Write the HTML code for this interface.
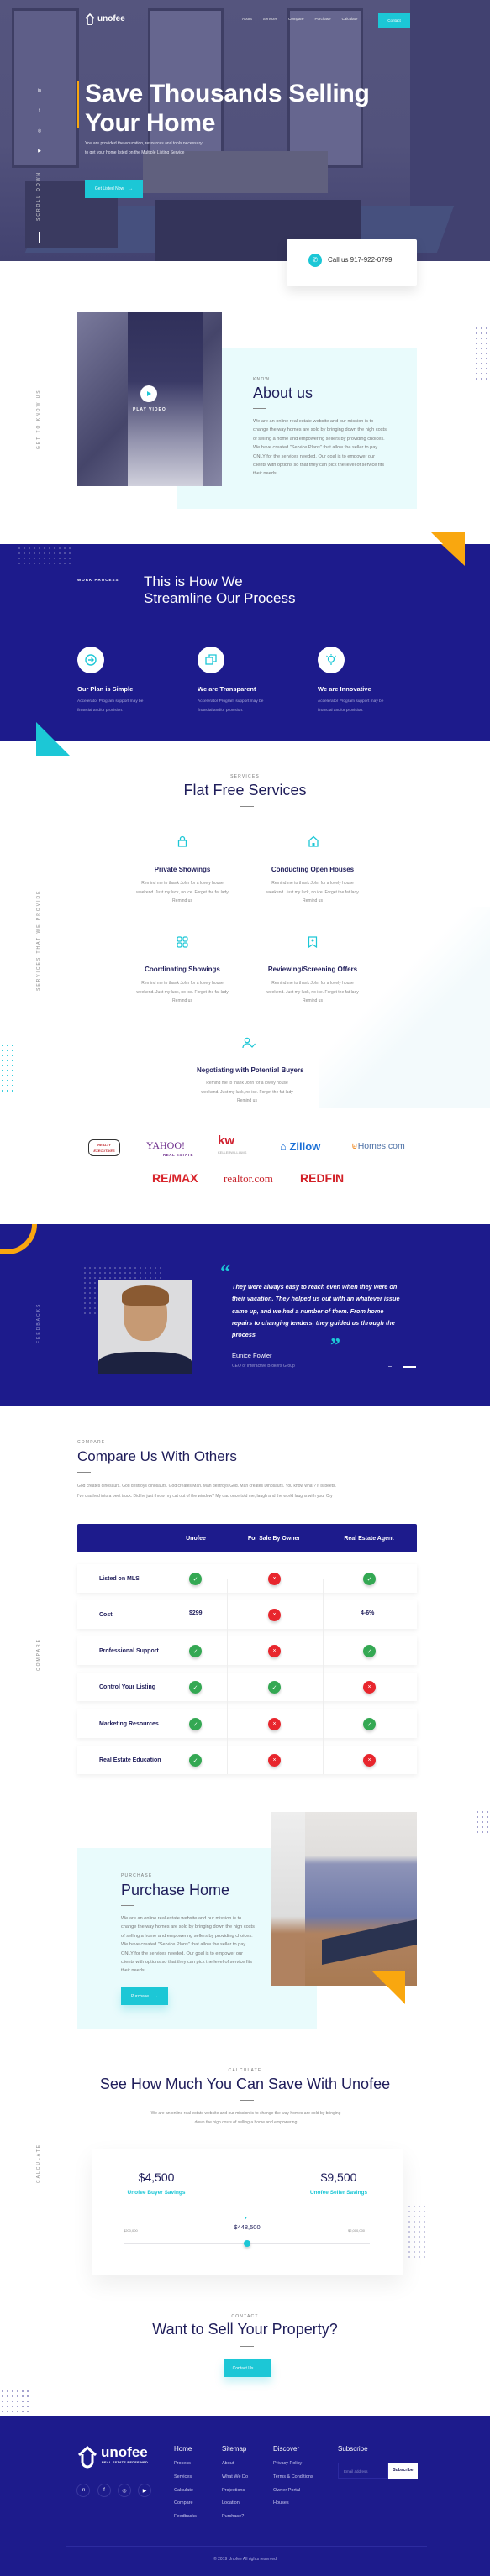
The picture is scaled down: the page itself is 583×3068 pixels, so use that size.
<!DOCTYPE html>
<html><head><meta charset="utf-8">
<style>
*{margin:0;padding:0;box-sizing:border-box}
body{width:583px;height:3068px;position:relative;font-family:"Liberation Sans",sans-serif;background:#fff;overflow:hidden;color:#1f1d5a}
.a{position:absolute}
.navy{background:#1d1b8c}
.cy{color:#1cc7d6}
.lbl{font-size:5px;letter-spacing:1.2px;color:#777;text-transform:uppercase}
.vt{position:absolute;transform:rotate(-90deg);transform-origin:left top;font-size:5px;letter-spacing:2px;color:#888;white-space:nowrap}
.p{font-size:5.6px;line-height:10.4px;color:#777}
.h2{font-size:18px;color:#1f1d5a;white-space:nowrap}
.ln{height:1px;width:16px;background:#888}
.btn{background:#1cc7d6;color:#fff;font-size:6px;display:flex;align-items:center;justify-content:center;gap:6px}
.dots{background-image:radial-gradient(circle,#8a89c0 0.8px,transparent 1.1px);background-size:6px 6px}
.ic{width:32px;height:32px;border-radius:50%;background:#fff;display:flex;align-items:center;justify-content:center}
.st{font-size:8px;font-weight:bold;color:#1f1d5a;text-align:center;white-space:nowrap}
.sp{font-size:5px;line-height:10.5px;color:#888;text-align:center;width:120px}
.row{position:absolute;left:92px;width:404px;height:34px;background:#fff;box-shadow:0 2px 6px rgba(0,0,0,.07);display:flex;align-items:center}
.ok,.no{width:15px;height:15px;border-radius:50%;color:#fff;font-size:7px;display:flex;align-items:center;justify-content:center;box-shadow:0 2px 3px rgba(0,0,0,.2);position:absolute;top:10px}
.ok{background:#34a853}.no{background:#e8262d}
.rl{position:absolute;left:26px;font-size:7px;font-weight:bold;color:#1f1d5a}
.fl{font-size:5.5px;color:#c8c8ee;line-height:15.8px}
.fh{font-size:8px;color:#fff}
.soc{width:16px;height:16px;border-radius:50%;border:1px solid #3a38a0;color:#fff;font-size:6px;display:flex;align-items:center;justify-content:center;position:absolute}
</style></head><body>

<!-- HERO -->
<div class="a" style="left:0;top:0;width:583px;height:311px;background:linear-gradient(180deg,#55557e 0%,#52527c 55%,#424270 100%);overflow:hidden">
  <div class="a" style="left:14px;top:10px;width:80px;height:190px;border:3px solid #3e3e64;background:#5e5e88"></div>
  <div class="a" style="left:176px;top:10px;width:90px;height:190px;border:3px solid #3e3e64;background:#66668f"></div>
  <div class="a" style="left:342px;top:10px;width:90px;height:190px;border:3px solid #3e3e64;background:#66668f"></div>
  <div class="a" style="left:488px;top:0;width:95px;height:311px;background:#414170"></div>
  <div class="a" style="left:170px;top:180px;width:220px;height:50px;background:#60607e"></div>
  <div class="a" style="left:40px;top:245px;width:490px;height:56px;background:#46507e;transform:skewX(-20deg)"></div>
  <div class="a" style="left:185px;top:238px;width:245px;height:73px;background:#34345a"></div>
  <div class="a" style="left:30px;top:215px;width:110px;height:80px;background:#3a3a60"></div>
</div>
<svg class="a" style="left:100px;top:15px" width="14" height="15" viewBox="0 0 14 15"><path d="M2 7L7 2L12 7M4 6V12a3 3 0 0 0 6 0V6" fill="none" stroke="#fff" stroke-width="1.6"/></svg>
<div class="a" style="left:116px;top:17px;font-size:10px;font-weight:bold;color:#fff">unofee</div>
<div class="a" style="left:288px;top:20px;font-size:4.5px;color:#eee;display:flex;gap:13px"><span>About</span><span>Services</span><span>Compare</span><span>Purchase</span><span>Calculate</span></div>
<div class="a btn" style="left:450px;top:15px;width:38px;height:18px;font-size:4.5px">Contact</div>
<div class="a" style="left:92px;top:97px;width:1.5px;height:55px;background:#f9a70f"></div>
<div class="a" style="left:101px;top:94px;font-size:30px;font-weight:bold;color:#fff;line-height:35px;letter-spacing:-.3px">Save Thousands Selling<br>Your Home</div>
<div class="a" style="left:101px;top:166px;font-size:5px;line-height:10.5px;color:#e6e6f2;width:140px">You are provided the education, resources and tools necessary to get your home listed on the Multiple Listing Service</div>
<div class="a btn" style="left:101px;top:214px;width:69px;height:22px;font-size:5px">Get Listed Now <span>→</span></div>
<div class="a" style="left:43px;top:96px;color:#fff;font-size:5px;line-height:24px;text-align:center;width:8px">in<br>f<br>◎<br>▶</div>
<div class="vt" style="left:43px;top:263px;color:#ddd">SCROLL DOWN</div>
<div class="a" style="left:45.5px;top:276px;width:1px;height:14px;background:#fff"></div>
<div class="a" style="left:341px;top:285px;width:155px;height:56px;background:#fff;box-shadow:0 6px 14px rgba(0,0,0,.1);border-radius:2px"></div>
<div class="a" style="left:367px;top:302px;width:16px;height:16px;border-radius:50%;background:#1cc7d6;color:#fff;font-size:8px;text-align:center;line-height:16px">✆</div>
<div class="a" style="left:390px;top:305px;font-size:8px;color:#333">Call us 917-922-0799</div>

<!-- ABOUT -->
<div class="vt" style="left:43px;top:535px">GET TO KNOW US</div>
<div class="a dots" style="left:564px;top:388px;width:19px;height:64px"></div>
<div class="a" style="left:211px;top:414px;width:285px;height:192px;background:#e9fbfc"></div>
<div class="a" style="left:92px;top:371px;width:172px;height:208px;background:linear-gradient(135deg,#7a7a9c,#45456a 50%,#8888a6)">
  <div class="a" style="left:60px;top:0;width:90px;height:208px;background:linear-gradient(180deg,#30305a,#3a3a66 40%,#9696b0 75%,#d0d0dc)"></div>
  <div class="a" style="left:75px;top:88px;width:20px;height:20px;border-radius:50%;background:#fff"></div>
  <div class="a" style="left:83px;top:95px;width:0;height:0;border-left:5px solid #1cc7d6;border-top:3px solid transparent;border-bottom:3px solid transparent"></div>
  <div class="a" style="left:66px;top:114px;font-size:5px;letter-spacing:1px;color:#fff;font-weight:bold">PLAY VIDEO</div>
</div>
<div class="a lbl" style="left:301px;top:449px">KNOW</div>
<div class="a h2" style="left:301px;top:458px">About us</div>
<div class="a ln" style="left:301px;top:486px"></div>
<div class="a p" style="left:301px;top:497px;width:160px">We are an online real estate website and our mission is to change the way homes are sold by bringing down the high costs of selling a home and empowering sellers by providing choices. We have created "Service Plans" that allow the seller to pay ONLY for the services needed. Our goal is to empower our clients with options so that they can pick the level of service fits their needs.</div>
<svg class="a" style="left:513px;top:634px" width="41" height="40"><polygon points="0,0 40,0 40,40" fill="#f9a70f"/></svg>

<!-- PROCESS -->
<div class="a navy" style="left:0;top:648px;width:583px;height:235px"></div>
<div class="a dots" style="left:20px;top:650px;width:64px;height:22px;opacity:.6"></div>
<svg class="a" style="left:513px;top:648px" width="41" height="26"><polygon points="12,0 40,0 40,26" fill="#f9a70f"/></svg>
<div class="a" style="left:92px;top:688px;font-size:4.5px;letter-spacing:1px;color:#fff;font-weight:bold">WORK PROCESS</div>
<div class="a" style="left:171px;top:683px;font-size:17px;color:#fff;line-height:20px">This is How We<br>Streamline Our Process</div>
<div class="a ic" style="left:92px;top:770px"><svg width="16" height="16"><circle cx="8" cy="8" r="6" fill="none" stroke="#1cc7d6" stroke-width="1.4"/><path d="M5 8h6M8.5 5.5L11 8l-2.5 2.5" fill="none" stroke="#1cc7d6" stroke-width="1.4"/></svg></div>
<div class="a ic" style="left:235px;top:770px"><svg width="16" height="16"><rect x="2" y="5" width="8" height="8" fill="none" stroke="#1cc7d6" stroke-width="1.3"/><path d="M6 5V2h8v8h-4" fill="none" stroke="#1cc7d6" stroke-width="1.3"/></svg></div>
<div class="a ic" style="left:378px;top:770px"><svg width="16" height="16"><circle cx="8" cy="7" r="3.5" fill="none" stroke="#1cc7d6" stroke-width="1.3"/><path d="M6.5 11h3M7 13h2M8 1v1.5M2.5 3l1 1M13.5 3l-1 1" stroke="#1cc7d6" stroke-width="1.2"/></svg></div>
<div class="a" style="left:92px;top:816px;font-size:7.5px;font-weight:bold;color:#fff">Our Plan is Simple</div>
<div class="a" style="left:235px;top:816px;font-size:7.5px;font-weight:bold;color:#fff">We are Transparent</div>
<div class="a" style="left:378px;top:816px;font-size:7.5px;font-weight:bold;color:#fff">We are Innovative</div>
<div class="a" style="left:92px;top:831px;font-size:4.8px;line-height:10.5px;color:#a8a8d8;width:90px">Accelerator Program support may be financial and/or provision.</div>
<div class="a" style="left:235px;top:831px;font-size:4.8px;line-height:10.5px;color:#a8a8d8;width:90px">Accelerator Program support may be financial and/or provision.</div>
<div class="a" style="left:378px;top:831px;font-size:4.8px;line-height:10.5px;color:#a8a8d8;width:90px">Accelerator Program support may be financial and/or provision.</div>
<svg class="a" style="left:43px;top:860px" width="40" height="40"><polygon points="0,0 40,40 0,40" fill="#1cc7d6"/></svg>

<!-- SERVICES -->
<div class="a" style="left:380px;top:1080px;width:203px;height:240px;background:linear-gradient(135deg,transparent 40%,#f3fafc 60%)"></div>
<div class="a lbl" style="left:0;top:922px;width:583px;text-align:center">SERVICES</div>
<div class="a h2" style="left:0;top:931px;width:583px;text-align:center">Flat Free Services</div>
<div class="a ln" style="left:286px;top:960px"></div>
<div class="vt" style="left:43px;top:1180px">SERVICES THAT WE PROVIDE</div>
<div class="a" style="left:0;top:1242px;width:18px;height:62px;background-image:radial-gradient(circle,#1cc7d6 0.9px,transparent 1.2px);background-size:6px 6px"></div>

<div class="a" style="left:206px;top:995px;width:22px;height:18px;text-align:center;font-size:12px" ><svg width="12" height="14"><rect x="1.5" y="6" width="9" height="7" fill="none" stroke="#1cc7d6" stroke-width="1.3"/><path d="M3.5 6V4a2.5 2.5 0 0 1 5 0v2" fill="none" stroke="#1cc7d6" stroke-width="1.3"/></svg></div>
<div class="a" style="left:362px;top:995px;width:22px;height:18px;text-align:center"><svg width="14" height="14"><path d="M2 6L7 1.5L12 6V13H2Z" fill="none" stroke="#1cc7d6" stroke-width="1.3"/><rect x="5.5" y="9" width="3" height="4" fill="#1cc7d6"/></svg></div>
<div class="a st" style="left:157px;top:1031px;width:120px">Private Showings</div>
<div class="a st" style="left:312px;top:1031px;width:120px">Conducting Open Houses</div>
<div class="a sp" style="left:157px;top:1047px">Remind me to thank John for a lovely house weekend. Just my luck, no ice. Forget the fat lady Remind us</div>
<div class="a sp" style="left:312px;top:1047px">Remind me to thank John for a lovely house weekend. Just my luck, no ice. Forget the fat lady Remind us</div>
<div class="a" style="left:210px;top:1115px"><svg width="14" height="14"><rect x="1" y="1" width="5" height="5" rx="1.5" fill="none" stroke="#1cc7d6" stroke-width="1.2"/><rect x="8" y="1" width="5" height="5" rx="1.5" fill="none" stroke="#1cc7d6" stroke-width="1.2"/><rect x="1" y="8" width="5" height="5" rx="1.5" fill="none" stroke="#1cc7d6" stroke-width="1.2"/><rect x="8" y="8" width="5" height="5" rx="1.5" fill="none" stroke="#1cc7d6" stroke-width="1.2"/></svg></div>
<div class="a" style="left:366px;top:1115px"><svg width="12" height="14"><path d="M1.5 1h9v12l-4.5-3-4.5 3Z" fill="none" stroke="#1cc7d6" stroke-width="1.2"/><circle cx="6" cy="5" r="1.5" fill="#1cc7d6"/></svg></div>
<div class="a st" style="left:157px;top:1150px;width:120px">Coordinating Showings</div>
<div class="a st" style="left:312px;top:1150px;width:120px">Reviewing/Screening Offers</div>
<div class="a sp" style="left:157px;top:1166px">Remind me to thank John for a lovely house weekend. Just my luck, no ice. Forget the fat lady Remind us</div>
<div class="a sp" style="left:312px;top:1166px">Remind me to thank John for a lovely house weekend. Just my luck, no ice. Forget the fat lady Remind us</div>
<div class="a" style="left:288px;top:1235px"><svg width="16" height="14"><circle cx="6" cy="4" r="2.7" fill="none" stroke="#1cc7d6" stroke-width="1.2"/><path d="M1 13c0-3 2.5-5 5-5s4 1 4.5 2M10 10l2 2 3.5-4" fill="none" stroke="#1cc7d6" stroke-width="1.2"/></svg></div>
<div class="a st" style="left:234px;top:1270px;width:120px">Negotiating with Potential Buyers</div>
<div class="a sp" style="left:234px;top:1285px">Remind me to thank John for a lovely house weekend. Just my luck, no ice. Forget the fat lady Remind us</div>

<!-- LOGOS -->
<div class="a" style="left:105px;top:1357px;width:38px;height:20px;border:1.5px solid #333;border-radius:6px;font-size:4px;color:#c0282d;font-weight:bold;text-align:center;line-height:7px;padding-top:2px;font-style:italic">REALTY<br>EXECUTIVES</div>
<div class="a" style="left:174px;top:1359px;font-family:'Liberation Serif',serif;font-size:12px;color:#6b2a8a;line-height:11px">YAHOO!<div style="font-size:4.5px;color:#6b2a8a;font-family:'Liberation Sans';padding-left:20px;font-weight:bold;letter-spacing:.5px">REAL ESTATE</div></div>
<div class="a" style="left:259px;top:1352px;font-size:15px;font-weight:bold;color:#d0212f;line-height:14px">kw<div style="font-size:4px;color:#999;font-weight:normal">KELLERWILLIAMS</div></div>
<div class="a" style="left:333px;top:1358px;font-size:13px;font-weight:bold;color:#1a6fd6">⌂ Zillow</div>
<div class="a" style="left:418px;top:1359px;font-size:10.5px;color:#4b6fa5"><span style="color:#f08a24">⊌</span>Homes.com</div>
<div class="a" style="left:181px;top:1395px;font-size:14px;font-weight:bold;color:#d8232a">RE/MAX</div>
<div class="a" style="left:266px;top:1396px;font-family:'Liberation Serif',serif;font-size:13px;color:#c8232b">realtor.com</div>
<div class="a" style="left:357px;top:1395px;font-size:14px;font-weight:bold;color:#d21f26">REDFIN</div>

<!-- TESTIMONIAL -->
<div class="a navy" style="left:0;top:1458px;width:583px;height:216px;overflow:hidden">
  <div class="a" style="left:-28px;top:-36px;width:72px;height:72px;border-radius:50%;border:6px solid #f9a70f"></div>
</div>
<div class="a dots" style="left:98px;top:1507px;width:98px;height:60px;opacity:.6"></div>
<div class="vt" style="left:43px;top:1600px;color:#9a9ad0">FEEDBACKS</div>
<div class="a" style="left:117px;top:1525px;width:111px;height:112px;background:#dcdcde;overflow:hidden">
  <div class="a" style="left:30px;top:10px;width:52px;height:62px;border-radius:45%;background:#c69a74"></div>
  <div class="a" style="left:28px;top:6px;width:56px;height:24px;border-radius:50% 50% 20% 20%;background:#8a5a32"></div>
  <div class="a" style="left:0;top:85px;width:111px;height:30px;border-radius:40% 40% 0 0;background:#1c2240"></div>
</div>
<div class="a cy" style="left:262px;top:1503px;font-size:24px;font-weight:bold;font-family:'Liberation Serif',serif">“</div>
<div class="a" style="left:276px;top:1526px;font-size:7.3px;line-height:14.3px;font-style:italic;font-weight:bold;color:#fff;width:200px">They were always easy to reach even when they were on their vacation. They helped us out with an whatever issue came up, and we had a number of them. From home repairs to changing lenders, they guided us through the process</div>
<div class="a cy" style="left:393px;top:1590px;font-size:24px;font-weight:bold;font-family:'Liberation Serif',serif">”</div>
<div class="a" style="left:276px;top:1610px;font-size:7.5px;color:#fff">Eunice Fowler</div>
<div class="a" style="left:276px;top:1624px;font-size:5px;color:#9a9ad0">CEO of Interactive Brokers Group</div>
<div class="a" style="left:462px;top:1627px;width:4px;height:1px;background:#9a9ad0"></div>
<div class="a" style="left:480px;top:1627px;width:15px;height:1.5px;background:#fff"></div>

<!-- COMPARE -->
<div class="a lbl" style="left:92px;top:1715px">COMPARE</div>
<div class="a h2" style="left:92px;top:1725px;font-size:17px">Compare Us With Others</div>
<div class="a ln" style="left:92px;top:1753px"></div>
<div class="a" style="left:92px;top:1765px;font-size:5px;line-height:11.5px;color:#888;width:310px">God creates dinosaurs. God destroys dinosaurs. God creates Man. Man destroys God. Man creates Dinosaurs. You know what? It is beets. I've crashed into a beet truck. Did he just throw my cat out of the window? My dad once told me, laugh and the world laughs with you. Cry</div>
<div class="a vt" style="left:43px;top:1990px">COMPARE</div>
<div class="a navy" style="left:92px;top:1815px;width:404px;height:34px;border-radius:2px"></div>
<div class="a" style="left:200px;top:1829px;width:66px;text-align:center;font-size:7px;font-weight:bold;color:#fff">Unofee</div>
<div class="a" style="left:276px;top:1829px;width:100px;text-align:center;font-size:7px;font-weight:bold;color:#fff">For Sale By Owner</div>
<div class="a" style="left:389px;top:1829px;width:100px;text-align:center;font-size:7px;font-weight:bold;color:#fff">Real Estate Agent</div>
<div class="row" style="top:1863px"><span class="rl">Listed on MLS</span><span class="ok" style="left:133px">✓</span><span class="no" style="left:227px">×</span><span class="ok" style="left:340px">✓</span></div>
<div class="row" style="top:1906px"><span class="rl">Cost</span><span class="a" style="left:133px;top:12px;font-size:7px;font-weight:bold">$299</span><span class="no" style="left:227px">×</span><span class="a" style="left:337px;top:12px;font-size:7px;font-weight:bold">4-6%</span></div>
<div class="row" style="top:1949px"><span class="rl">Professional Support</span><span class="ok" style="left:133px">✓</span><span class="no" style="left:227px">×</span><span class="ok" style="left:340px">✓</span></div>
<div class="row" style="top:1992px"><span class="rl">Control Your Listing</span><span class="ok" style="left:133px">✓</span><span class="ok" style="left:227px">✓</span><span class="no" style="left:340px">×</span></div>
<div class="row" style="top:2036px"><span class="rl">Marketing Resources</span><span class="ok" style="left:133px">✓</span><span class="no" style="left:227px">×</span><span class="ok" style="left:340px">✓</span></div>
<div class="row" style="top:2079px"><span class="rl">Real Estate Education</span><span class="ok" style="left:133px">✓</span><span class="no" style="left:227px">×</span><span class="no" style="left:340px">×</span></div>
<div class="a" style="left:270px;top:1880px;width:1px;height:233px;background:#eee"></div>
<div class="a" style="left:384px;top:1880px;width:1px;height:233px;background:#eee"></div>
<div class="a dots" style="left:565px;top:2155px;width:18px;height:30px"></div>

<!-- PURCHASE -->
<div class="a" style="left:92px;top:2201px;width:285px;height:216px;background:#e9fbfc"></div>
<div class="a" style="left:323px;top:2158px;width:173px;height:207px;background:linear-gradient(180deg,#e8e6e4 0%,#e0dedc 25%,#8e94b8 30%,#6e79a8 60%,#b08260 70%,#a87a52 100%);overflow:hidden">
  <div class="a" style="left:0;top:0;width:40px;height:207px;background:linear-gradient(180deg,#eee,#ddd 60%,#b08260 70%)"></div>
  <div class="a" style="left:60px;top:140px;width:113px;height:30px;background:#2a3350;transform:skewY(-12deg)"></div>
</div>
<svg class="a" style="left:442px;top:2347px" width="40" height="40"><polygon points="0,0 40,0 40,40" fill="#f9a70f"/></svg>
<div class="a lbl" style="left:144px;top:2231px">PURCHASE</div>
<div class="a h2" style="left:144px;top:2241px">Purchase Home</div>
<div class="a ln" style="left:144px;top:2269px"></div>
<div class="a p" style="left:144px;top:2280px;width:160px">We are an online real estate website and our mission is to change the way homes are sold by bringing down the high costs of selling a home and empowering sellers by providing choices. We have created "Service Plans" that allow the seller to pay ONLY for the services needed. Our goal is to empower our clients with options so that they can pick the level of service fits their needs.</div>
<div class="a btn" style="left:144px;top:2367px;width:56px;height:21px;font-size:5px;box-shadow:0 6px 10px rgba(28,199,214,.25)">Purchase <span>→</span></div>

<!-- CALCULATE -->
<div class="a lbl" style="left:0;top:2463px;width:583px;text-align:center">CALCULATE</div>
<div class="a h2" style="left:0;top:2472px;width:583px;text-align:center">See How Much You Can Save With Unofee</div>
<div class="a ln" style="left:286px;top:2501px"></div>
<div class="a" style="left:175px;top:2512px;width:235px;text-align:center;font-size:5px;line-height:10.5px;color:#888">We are an online real estate website and our mission is to change the way homes are sold by bringing down the high costs of selling a home and empowering</div>
<div class="vt" style="left:43px;top:2600px">CALCULATE</div>
<div class="a" style="left:110px;top:2560px;width:370px;height:150px;background:#fff;box-shadow:0 10px 25px rgba(0,0,0,.07)"></div>
<div class="a dots" style="left:484px;top:2625px;width:22px;height:66px;opacity:.6"></div>
<div class="a" style="left:140px;top:2585px;width:92px;text-align:center;font-size:14px;color:#1f1d5a">$4,500</div>
<div class="a cy" style="left:140px;top:2608px;width:92px;text-align:center;font-size:6.5px;font-weight:bold">Unofee Buyer Savings</div>
<div class="a" style="left:357px;top:2585px;width:92px;text-align:center;font-size:14px;color:#1f1d5a">$9,500</div>
<div class="a cy" style="left:357px;top:2608px;width:92px;text-align:center;font-size:6.5px;font-weight:bold">Unofee Seller Savings</div>
<div class="a cy" style="left:290px;top:2639px;font-size:5px">▼</div>
<div class="a" style="left:260px;top:2648px;width:68px;text-align:center;font-size:7.5px;color:#1f1d5a">$448,500</div>
<div class="a" style="left:147px;top:2654px;font-size:4px;color:#888">$200,000</div>
<div class="a" style="left:414px;top:2654px;font-size:4px;color:#888">$2,000,000</div>
<div class="a" style="left:147px;top:2671px;width:293px;height:1.5px;background:#e4e4e8"></div>
<div class="a" style="left:290px;top:2668px;width:8px;height:8px;border-radius:50%;background:#1cc7d6;box-shadow:0 2px 3px rgba(0,0,0,.2)"></div>

<!-- CONTACT -->
<div class="a lbl" style="left:0;top:2756px;width:583px;text-align:center">CONTACT</div>
<div class="a h2" style="left:0;top:2764px;width:583px;text-align:center">Want to Sell Your Property?</div>
<div class="a ln" style="left:286px;top:2794px"></div>
<div class="a btn" style="left:266px;top:2810px;width:57px;height:21px;font-size:5px;box-shadow:0 6px 10px rgba(28,199,214,.25)">Contact Us <span>→</span></div>
<div class="a dots" style="left:0;top:2845px;width:36px;height:36px"></div>

<!-- FOOTER -->
<div class="a navy" style="left:0;top:2877px;width:583px;height:191px"></div>
<svg class="a" style="left:91px;top:2912px" width="26" height="28" viewBox="0 0 26 28"><path d="M3 12L13 3L23 12M7 11V20a6 6 0 0 0 12 0V11" fill="none" stroke="#fff" stroke-width="3"/></svg>
<div class="a" style="left:120px;top:2911px;font-size:17px;font-weight:bold;color:#fff">unofee</div>
<div class="a" style="left:121px;top:2931px;font-size:3.8px;font-weight:bold;color:#fff;letter-spacing:.3px">REAL ESTATE REDEFINED</div>
<div class="soc" style="left:91px;top:2958px">in</div>
<div class="soc" style="left:116px;top:2958px">f</div>
<div class="soc" style="left:140px;top:2958px">◎</div>
<div class="soc" style="left:164px;top:2958px">▶</div>
<div class="a" style="left:207px;top:2912px"><div class="fh">Home</div><div class="fl" style="margin-top:6px">Process<br>Services<br>Calculate<br>Compare<br>Feedbacks</div></div>
<div class="a" style="left:264px;top:2912px"><div class="fh">Sitemap</div><div class="fl" style="margin-top:6px">About<br>What We Do<br>Projections<br>Location<br>Purchase?</div></div>
<div class="a" style="left:325px;top:2912px"><div class="fh">Discover</div><div class="fl" style="margin-top:6px">Privacy Policy<br>Terms &amp; Conditions<br>Owner Portal<br>Houses</div></div>
<div class="a" style="left:402px;top:2912px"><div class="fh">Subscribe</div></div>
<div class="a" style="left:402px;top:2933px;width:60px;height:19px;border:1px solid #2c2aa0;font-size:4.5px;color:#8a8ac8;padding:7px 6px">Email address</div>
<div class="a" style="left:462px;top:2933px;width:35px;height:19px;background:#fff;font-size:5px;font-weight:bold;color:#1f1d5a;text-align:center;line-height:19px">Subscribe</div>
<div class="a" style="left:78px;top:3032px;width:430px;height:1px;background:#2d2ba0"></div>
<div class="a" style="left:0;top:3045px;width:583px;text-align:center;font-size:5px;color:#b0b0e0">© 2019 Unofee All rights reserved</div>
</body></html>
